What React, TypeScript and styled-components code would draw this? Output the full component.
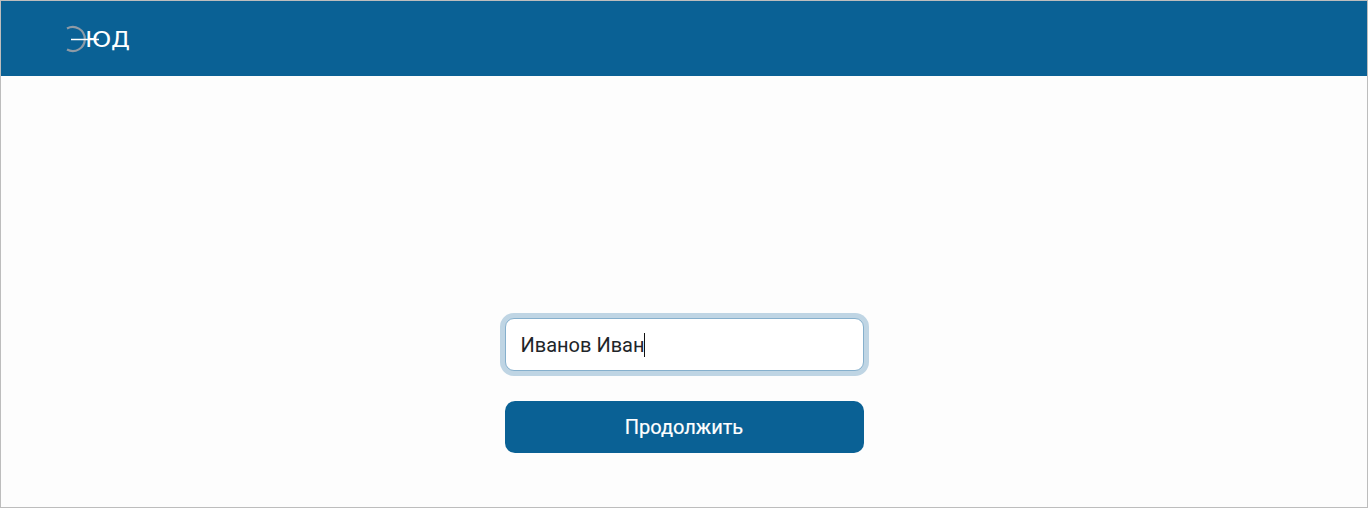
import React from "react";
import styled, { createGlobalStyle } from "styled-components";

const Global = createGlobalStyle`
  html, body { margin: 0; padding: 0; height: 100%; background: #fdfdfd; }
  #root { height: 100%; }
  * { box-sizing: border-box; }
`;

const Frame = styled.div`
  width: 1368px;
  height: 508px;
  border: 1px solid #bdbdbd;
  display: flex;
  flex-direction: column;
  background: #fdfdfd;
  font-family: Roboto, "Liberation Sans", sans-serif;
`;

const Header = styled.header`
  height: 75px;
  flex: none;
  background: #0a6195;
  display: flex;
  align-items: flex-start;
  padding: 22px 0 0 65px;
`;

const Logo = styled.div`
  position: relative;
  width: 66px;
  height: 32px;
  display: flex;
  align-items: center;
`;

const LogoMark = styled.svg`
  position: absolute;
  left: 0;
  top: 0;
`;

const LogoText = styled.span`
  margin: 2px 0 0 19px;
  font-family: "DejaVu Sans", "Liberation Sans", sans-serif;
  font-size: 21.5px;
  line-height: 32px;
  letter-spacing: -0.2px;
  color: #fff;
  transform: scaleX(1.13);
  transform-origin: left center;
`;

const Main = styled.main`
  flex: 1;
  display: flex;
  flex-direction: column;
  align-items: center;
  justify-content: flex-end;
  padding-bottom: 54px;
  gap: 30px;
`;

const Field = styled.div`
  width: 359px;
  height: 53px;
  border: 1px solid #86b0cd;
  border-radius: 9px;
  box-shadow: 0 0 0 5px #bfd5e4;
  background: #fff;
  display: flex;
  align-items: center;
  padding-left: 15px;
  font-size: 20px;
  color: #212529;
`;

const Caret = styled.span`
  display: inline-block;
  width: 1px;
  height: 24px;
  margin-left: -1px;
  background: #111;
`;

const Button = styled.button`
  width: 359px;
  height: 52px;
  border: 0;
  border-radius: 10px;
  background: #0a6195;
  color: #fff;
  font-family: Roboto, "Liberation Sans", sans-serif;
  font-size: 20px;
  font-weight: 400;
  -webkit-text-stroke: 0.2px #fff;
  padding: 0;
`;

export default function App() {
  return (
    <>
      <Global />
      <Frame>
        <Header>
          <Logo>
            <LogoText>ЮД</LogoText>
            <LogoMark width="66" height="32" viewBox="0 0 66 32" fill="none">
              <path d="M1 5.5 A12 12 0 1 1 1 26.5" stroke="#8d9aa6" strokeWidth="2.2" />
              <path d="M5 16.5 H33" stroke="#fff" strokeWidth="1.5" />
            </LogoMark>
          </Logo>
        </Header>
        <Main>
          <Field>
            Иванов Иван
            <Caret />
          </Field>
          <Button>Продолжить</Button>
        </Main>
      </Frame>
    </>
  );
}
